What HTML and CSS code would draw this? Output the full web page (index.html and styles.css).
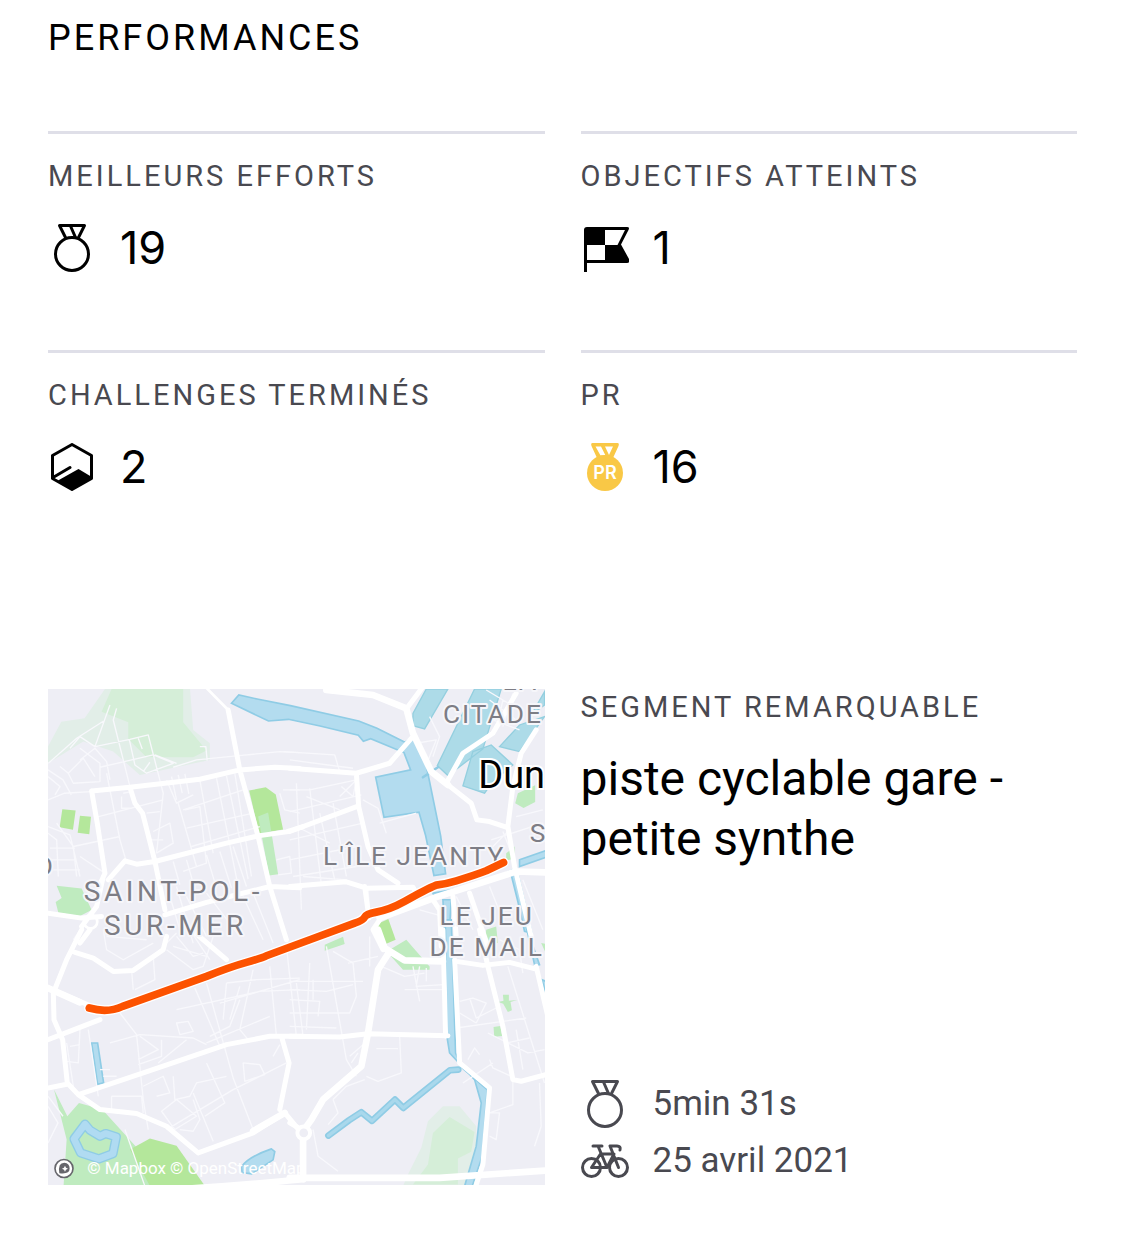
FILE: index.html
```html
<!DOCTYPE html>
<html lang="fr">
<head>
<meta charset="utf-8">
<meta name="viewport" content="width=device-width, initial-scale=1">
<title>Performances</title>
<link rel="stylesheet" href="styles.css">
</head>
<body>
<main class="page">
  <h1 class="heading">PERFORMANCES</h1>
  <section class="stats">
    <article class="stat">
      <h2 class="label">MEILLEURS EFFORTS</h2>
      <p class="value">
        <svg class="icon line" viewBox="0 0 48 48" aria-hidden="true"><circle cx="24" cy="30" r="16.5"/><path d="M17.500 13.500 11.500 1.500h25L30.500 13.500M22.500 2l5 11.500"/></svg>
        <span>19</span>
      </p>
    </article>
    <article class="stat">
      <h2 class="label">OBJECTIFS ATTEINTS</h2>
      <p class="value">
        <svg class="icon" viewBox="0 0 48 48" aria-hidden="true"><path fill-rule="evenodd" d="M3 48V6q0-3 3-3h40q3 0 1.500 3L40 20.500l8 14.500q1.500 4-2 4H6v9zM24 6v15h12.500L44 6zM6 21v15h18V21z"/></svg>
        <span>1</span>
      </p>
    </article>
    <article class="stat">
      <h2 class="label">CHALLENGES TERMINÉS</h2>
      <p class="value">
        <svg class="icon" viewBox="0 0 48 48" aria-hidden="true"><path class="line" d="M24 1.500 43.500 12.500v23L24 46.500 4.500 35.500v-23zM5 34.500 22 24.500"/><path d="M10 37.500 30.500 26 43 33.500v2.500L24 47z"/></svg>
        <span>2</span>
      </p>
    </article>
    <article class="stat">
      <h2 class="label">PR</h2>
      <p class="value">
        <svg class="icon gold" viewBox="0 0 48 48" aria-hidden="true"><circle cx="24" cy="30" r="18"/><path fill-rule="evenodd" d="M11.500 0h25q2 0 1 3L32 15H16L10.500 3q-1-3 1-3zM14.500 3.500l5 9h5L20 3.500zM24 3.500l4 8.500 4-8.500z"/><text class="pr" x="24" y="36">PR</text></svg>
        <span>16</span>
      </p>
    </article>
  </section>

  <section class="segment">
    <svg class="map" viewBox="0 0 1491 1488" role="img" aria-label="Carte du segment" preserveAspectRatio="xMidYMid slice">
      <!-- parks -->
      <g transform="translate(-24 -27)">
        <path class="wood-soft" d="M200 20H450l10 130 50 40v50L300 285l-80-70-90-30L24 250v-50l40-75 70-10z"/>
        <path class="wood" d="M215 27H430v100l70 85-40 20H320l-55-55v-50L185 95z"/>
        <path class="park" d="M67 388l40 4-8 58-40-8zM120 408l33 3-5 52-35-4zM628 332l50-10 30 22 22 105-72 12z"/>
        <path class="grass" d="M50 618l75 8 30 65-35 18-65-10-8-32 18-12zM655 410l30-12 10 60 20 125-27 4z"/>
      </g>
      <g transform="translate(726 -27)">
        <path class="grass" d="M685 340l52-24v50l-35 18-25-14zM650 520l25-20v35l-25 8zM590 750l30-10 5 50h-40zM300 810l50-30 70 80v10h-80l-45-50zM105 795l55-24 5 22-60 20z"/>
        <path class="park" d="M258 735l38-17 22 62-35 15z"/>
      </g>
      <g transform="translate(-24 723)">
        <path class="grass" d="M42 480l40 80 35-40 70 20 100 110 60 130H70l10-150z"/>
        <path class="park" d="M270 660l60-33 80 22 85 120H330z"/>
      </g>
      <g transform="translate(726 723)">
        <path class="wood-soft" d="M355 735l40-80 20-80 45-45h50l50 60v180H340z"/>
        <path class="wood" d="M370 765l45-60 15-95 50-48 75 45-10 60-40 20v78z"/>
        <path class="grass" d="M640 195h18v18l25-2-20 6 4 25-12 5-14-25-15-5 16-4zM612 292l20-3 6 30-24 2zM755 40l20 4v40z"/>
      </g>
      <!-- water -->
      <g transform="translate(726 -27)">
        <path class="water" d="M-175 70l22-25 55 12 100 20 205 46 55 22 84 42 22-15 40 75 45 220 15 115-35 5-25-120-20-70-105 15-25-120 105-22-20-52-100-42-22 8-15-18-115-28-95-20-60 5z"/>
        <path class="dock" d="M410 27h65l-70 120-35-10V100zM555 27h80l-55 180-105 80-32-30zM550 215l55-20 65 60-60 50-25 35-65-22zM630 200l60-65 75-25-75 105zM765 35v40l-40 30z"/>
        <path class="water" d="M690 540l80-28v20l-80 28zM665 585l22 5 40 170-22-5-20-90zM460 660h25l-6 100h-14zM430 640q130-20 240-70l-20 15q-110 45-215 65z"/>
        <path class="creek" d="M400 292l45-30"/>
      </g>
      <g transform="translate(-24 723)">
        <path class="water" d="M155 340h18l18 120-18 4zM605 712q20-30 90-54l10 8-5 25-65 42-28-4z"/>
        <path class="lake-edge" d="M135 584 102 628l20 42 55 18 42-16 10-50-32-10-17 8-30-18z"/>
        <path class="lake" d="M135 584 102 628l20 42 55 18 42-16 10-50-32-10-17 8-30-18z"/>
      </g>
      <g transform="translate(726 723)">
        <path class="canal-edge" d="M116 618l62-46 37-24 32 26 69-64 25 25 140-113 25-2"/>
        <path class="canal" d="M116 618l62-46 37-24 32 26 69-64 25 25 140-113 25-2"/>
        <path class="water" d="M467-30h18l13 400 20 45 75 65-15 200-30 90h-23l35-120 15-130-20-70-75-80-8-50z"/>
        <path class="water" d="M710-10l40 115-14 4zM757 150l12 40v-35z"/>
      </g>
      <!-- side streets -->
      <g class="street" transform="translate(-24 -27)">
        <path d="M25 250 110 175 190 124M210 75 165 200 120 170 90 205M230 85 220 120 270 320M165 200 270 178 325 165 370 340 350 520M120 240 165 205 200 245 210 300M60 260 85 280 130 235 165 290M85 280 100 310 180 305V250L120 205M180 262 340 225 400 250 320 280 285 255 268 178M400 262 470 240 590 228 720 215 780 218M345 225 410 250M480 200h18l4 42M295 175l12 32M310 275l20-28"/>
        <path d="M200 280 240 480 260 548M170 412 370 360M380 300 410 370 460 345M395 290l15 70M415 285l12 55M435 282l12 60M480 300l40 220M530 295l62 310M560 288l65 310M585 280 635 590M415 370 470 560M430 390 610 330M440 445 640 400M455 500 660 440M340 455 390 430 400 490 350 520M320 400l40-5M335 480h35M435 390 480 380 500 550 430 575M24 360l50-20 80-5M24 290 60 320 45 345M24 270l45 30 25 45M24 440 90 465 120 590M50 430 100 500 110 590M24 460 50 480 55 590M30 505h75M35 540h75M40 570h80M100 500 240 470M120 530 195 580M400 545l20 70M440 540l30 105M500 525l30 100M540 515l35 110M580 500l40 120M640 640l60 150M610 650l60 130M720 340l15 50 45 10M730 330h50M710 540l40-10 5 50-40 5M250 340l25-5M245 350v35h30M375 600l45 150M410 620l50 170M440 650l60 120M500 640l100 130"/>
      </g>
      <g class="street" transform="translate(726 -27)">
        <path d="M-20 215 135 225 150 275M0 240 190 265M0 330 60 330 200 300M20 310l15 380M60 325l35 290M90 400l45 200M130 370l40 220M0 395l215-50M0 480 220 430M0 540 200 500M10 590l190-30M220 360l45 25 25 75M270 430l110-30M380 190l60-10-30 75M420 110l30 60-20 60M590 30 690 90M600 60l80 60M610 120l80 30M640 60l-20 90M670 40l-30 100M605 480l155-50M610 500 660 450M640 455l20 50M680 410l80-20M235 630 240 700M150 350 200 300 190 350 155 320M50 350l100 40M20 440l100 50M40 590l130 10M500 650l50 100M600 620l40 100M700 600l60 150M390 690l70 20"/>
      </g>
      <g class="street" transform="translate(-24 723)">
        <path d="M120 0 100 30M190 0 200 60 250 90 340 40M200 20 320 30M275 120l5 60M285 180 345 150 340 80 410 10M380 60l80 60 30-10 30-90M410 20l50 60 30-10M450 0l60 90M400 50 500 80M410 240 660 185 780 180M465 175 540 350M500 160 580 445 640 600M560 160 650 150 780 145M560 160l-10 110M640 120 600 300 625 330M690 110l20 210M740 50l30 270M500 340 690 260M540 220 780 150M510 320 570 290 600 210M600 170l-30 100M410 280l35-5 15 30-40 10zM210 340 300 315 460 325 500 345M240 250 290 315 310 510 325 600M300 320l55 40-60 30M365 330v50l-70 25M440 330 355 400M310 470 370 440 390 490 350 500M400 440 405 510 450 500 470 460 560 440M365 545l45-35 60 50-65 40zM460 510 480 570 460 605 420 600M460 490l60 145M500 400l55 120-60 40M380 600 580 480 740 400M610 400l5 55 60-20-15-30zM80 340l20 130M120 300l-5 100-35-5M90 350l30-5M145 300l30 200M180 420h30M190 440h40M215 500h90l5 50M215 500v50M24 500l45 60M24 530l30 50-30 60M255 600l60 170M700 380l20-35"/>
      </g>
      <g class="street" transform="translate(726 723)">
        <path d="M0 155h220M0 180l110 5 80-20M0 210l90 5-5 45M0 250l180 0 20-50-10-100-60-35M110 50l60 340 30 50M60 100l-10 200M20 160l20 160M70 150v60M0 290l140 5M175 100l90-20M240 20v90M275 110l70 30 60-10M370 110l20 105M345 180h115M390 110l-10 60 80-5M410 115v40M330 320l5 110-70 25-35-15M260 357h65M180 380l40-35M185 400l20-30M130 510l15 40-30 35M130 510 170 470 225 450M70 600l15 80 60 45M500 295l210-30M510 215l40-10 40 15-30 60M540 205l20 60 60-30M655 110l110 350M595 310l120 60 50-10M650 340l70-15M680 300l20 120M520 460l90-60M600 390l10 25 55 25M670 450v75l-70 25M600 550h30l-10 80-20-10M750 460l5 130-20 60M535 390l20-35 15 20M510 250 560 280M700 130 690 60 630 30"/>
      </g>
      <!-- main roads -->
      <g class="road" transform="translate(-24 -27)">
        <path class="thin" d="M500 24 565 90"/>
        <path d="M565 90 600 270 655 470 690 620 740 780M155 333 270 322 480 298 600 270 705 262 780 266M155 333 172 430 195 580 175 625M205 600 255 543 290 553 345 545 560 490 655 468 740 456 790 440M270 322 285 370 308 400 345 545 375 690M375 705 500 668 690 620 780 624M24 700 125 715 185 710M190 590l-20 90-45 60M150 750 120 790"/>
        <circle class="thin" cx="152" cy="726" r="20"/>
      </g>
      <g class="road" transform="translate(726 -27)">
        <path class="wide" d="M110 30 250 45 350 85 370 160 425 275 475 315"/>
        <path d="M400 20 355 80M475 315 545 370 562 420 600 425 650 442M470 310 520 220 610 160 680 40M0 265 200 280 300 250 365 175M200 280 207 380 235 500 265 570 325 610M207 378 0 455M0 620 170 606 230 625 370 622 385 650M225 620 238 715M740 150 695 220 670 320 655 440 675 560 725 770"/>
        <path class="wide" d="M270 715 440 652 680 575 770 578"/>
        <path d="M430 660 450 690 455 800M490 650l10 120M540 640l55 160M270 720l-20 30 30 60"/>
      </g>
      <g class="road" transform="translate(-24 723)">
        <path d="M24 330 180 270M24 175l120 50M125 0 80 90 40 190 42 270 68 330 82 460 115 495M24 475l60-12M115 495 310 430 560 345 690 320H790M105 68 160 85 220 125 280 122 370 60 380 20M455 0 560 90M115 495 180 540 290 552 380 590 475 670 640 610 735 550 785 610M725 320 748 400 720 540"/>
        <path class="wide" d="M640 605 735 550M24 175 120 218M100 790Q440 785 780 750"/>
      </g>
      <g class="road" transform="translate(726 723)">
        <path class="wide" d="M0 745h450l320-22M265 0 285 55 345 92 460 95M300 65 265 120 235 310 215 410 100 510 65 570 40 605 40 750"/>
        <path d="M0 320 150 322 235 312 475 318M460 0 468 320M495 90l15 310 90 75-20 230-20 60M500 95 580 107 660 98 740 118M570 0 595 110 640 290 670 450 695 455 770 435M740 110 775 260M0 580l45 25"/>
        <circle class="round" cx="42" cy="610" r="19"/>
      </g>
      <!-- place names -->
      <g class="place">
        <text x="1365" y="4">LA</text>
        <text x="1186" y="101">CITADE</text>
        <text x="1447" y="459">S</text>
        <text x="826" y="529">L'ÎLE JEANTY</text>
        <text x="1176" y="708">LE JEU</text>
        <text x="1146" y="802">DE MAIL</text>
        <text x="-40" y="558">O</text>
      </g>
      <g class="place town">
        <text x="107" y="638">SAINT-POL-</text>
        <text x="168" y="739">SUR-MER</text>
      </g>
      <text class="city" x="1292" y="296">Dun</text>
      <!-- recorded route -->
      <g transform="translate(726 -27)">
        <path class="route-case" d="M-602 985Q-547 1001-502 980L-250 890Q-180 862-130 848T-70 828L60 780 195 730Q220 722 225 712T260 697Q300 690 345 665 410 628 440 616 470 612 500 603 560 585 590 573L642 548"/>
        <path class="route" d="M-602 985Q-547 1001-502 980L-250 890Q-180 862-130 848T-70 828L60 780 195 730Q220 722 225 712T260 697Q300 690 345 665 410 628 440 616 470 612 500 603 560 585 590 573L642 548"/>
      </g>
      <g class="credit">
        <circle cx="48" cy="1440" r="27"/>
        <path d="M34 1454q-5-31 15-31 16 2 16 17 0 18-31 14zm17-22-3 6-6 3 6 3 3 6 3-6 6-3-6-3z"/>
        <text x="118" y="1456">© Mapbox © OpenStreetMap</text>
      </g>
    </svg>
    <div class="details">
      <div>
        <h2 class="label">SEGMENT REMARQUABLE</h2>
        <p class="title">piste cyclable gare - petite synthe</p>
      </div>
      <ul class="facts">
        <li class="fact">
          <svg class="icon line" viewBox="0 0 48 48" aria-hidden="true"><circle cx="24" cy="30" r="16.5"/><path d="M17.500 13.500 11.500 1.500h25L30.500 13.500M22.500 2l5 11.500"/></svg>
          <span>5min 31s</span>
        </li>
        <li class="fact">
          <svg class="icon line" viewBox="0 0 48 48" aria-hidden="true"><circle cx="10.500" cy="30.500" r="9"/><circle cx="37.500" cy="30.500" r="9"/><path d="M12 9h9M17 9l9 21.500M10.500 30.500h15.500L33 17H19.500zM37.500 30.500 29 9h7q4 0 3 4"/></svg>
          <span>25 avril 2021</span>
        </li>
      </ul>
    </div>
  </section>
</main>
</body>
</html>
```
FILE: styles.css
```css
* { box-sizing: border-box; }

body {
  margin: 0;
  background: #fff;
  color: #000;
  font-family: Roboto, "Liberation Sans", sans-serif;
}

h1, h2, p, ul { margin: 0; padding: 0; font-weight: 400; }

.page { padding: 11px 48px 48px; }

.heading {
  margin-bottom: 66px;
  font-size: 36px;
  line-height: 54px;
  letter-spacing: 3px;
}

.stats, .segment {
  display: grid;
  grid-template-columns: 1fr 1fr;
  column-gap: 36px;
}

.stats { row-gap: 72px; margin-bottom: 192px; }

.stat { border-top: 3px solid #dfdfe8; padding-top: 24px; }

.label {
  margin-bottom: 24px;
  color: #494950;
  font-size: 29px;
  line-height: 36px;
  letter-spacing: 3px;
}

.value, .fact { display: flex; align-items: center; gap: 24px; }

.value {
  font-family: Inter, "Liberation Sans", sans-serif;
  font-size: 45px;
  line-height: 60px;
}

.icon { width: 48px; height: 48px; flex: none; fill: currentColor; }

.line {
  fill: none;
  stroke: currentColor;
  stroke-width: 3px;
  stroke-linejoin: round;
  stroke-linecap: round;
}

.gold { color: #f9c846; }

.pr {
  fill: #fff;
  font: 600 18px Inter, sans-serif;
  text-anchor: middle;
}

.details { display: flex; flex-direction: column; justify-content: space-between; }

.title { font-size: 48px; line-height: 60px; }

.facts { display: grid; gap: 9px; list-style: none; }

.fact { color: #494950; font-size: 35px; line-height: 48px; }

.map { display: block; width: 100%; aspect-ratio: 497 / 496; background: #eeeef5; overflow: hidden; }

.wood-soft { fill: #e2eee8; }
.wood { fill: #d5eed8; }
.grass { fill: #bfebbf; }
.park { fill: #b4e79b; }

.water { fill: #b3dcef; stroke: #8fcce5; stroke-width: 5px; }
.dock { fill: #addbe8; stroke: #94cfdf; stroke-width: 4px; }
.creek, .canal-edge, .canal, .lake-edge, .lake { fill: none; stroke: #8fcce5; stroke-width: 20px; stroke-linecap: round; stroke-linejoin: round; }
.creek { stroke-width: 8px; }
.canal { stroke: #a9d8ec; stroke-width: 10px; }
.lake-edge { stroke-width: 28px; }
.lake { stroke: #b0dbf2; stroke-width: 20px; }

.street { fill: none; stroke: #f8f8fc; stroke-width: 4px; stroke-linejoin: round; }
.road { fill: none; stroke: #fff; stroke-width: 15px; stroke-linejoin: round; stroke-linecap: round; }
.wide { stroke-width: 20px; }
.thin { stroke-width: 8px; }
.round { fill: #eeeef5; stroke-width: 12px; }

.route-case, .route { fill: none; stroke: #fc5200; stroke-width: 23px; stroke-linejoin: round; stroke-linecap: round; }
.route-case { stroke: #fff; stroke-width: 31px; }

.place {
  fill: #7d7d85;
  stroke: #f6f6fa;
  stroke-width: 12px;
  stroke-linejoin: round;
  paint-order: stroke;
  font-size: 79px;
  letter-spacing: 6px;
}

.town { font-size: 84px; letter-spacing: 11px; }

.city {
  fill: #000;
  stroke: #fff;
  stroke-width: 12px;
  paint-order: stroke;
  font-size: 114px;
}

.credit { fill: #fff; font-size: 51px; }
.credit circle { stroke: #66666c; stroke-width: 5px; }
.credit path { fill: #66666c; fill-rule: evenodd; }
```
